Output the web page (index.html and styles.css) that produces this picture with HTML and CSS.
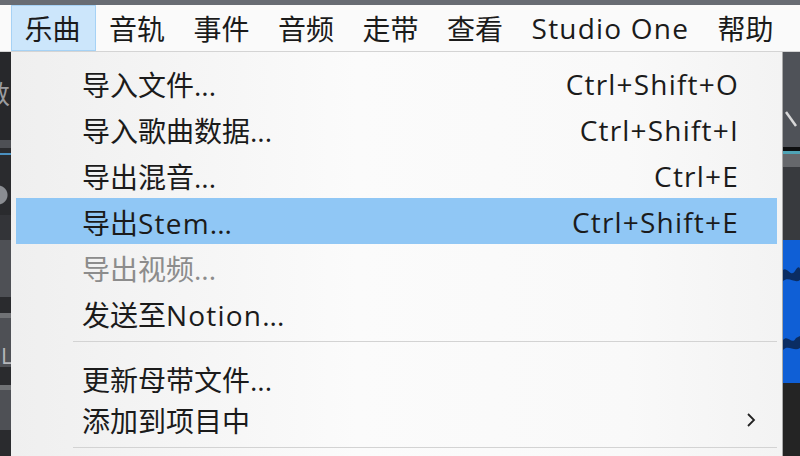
FILE: index.html
```html
<!DOCTYPE html>
<html>

<head>
    <title>Studio One - 乐曲</title>
    <link rel="stylesheet" href="styles.css">
</head>

<body>
    <div class="screen">
        <div class="topline"></div>
        <nav class="menubar">
            <span class="menu-title active">乐曲</span>
            <span class="menu-title">音轨</span>
            <span class="menu-title">事件</span>
            <span class="menu-title">音频</span>
            <span class="menu-title">走带</span>
            <span class="menu-title">查看</span>
            <span class="menu-title lat">Studio One</span>
            <span class="menu-title">帮助</span>
        </nav>
        <div class="workspace">
            <!-- bits of the DAW window behind the menu -->
            <div class="edge edge-left">
                <div class="band l-head glyph">数</div>
                <div class="band l-grey" style="height: 8px"></div>
                <div class="band l-dark" style="height: 5px"></div>
                <div class="band l-blue"></div>
                <div class="band l-knob"></div>
                <div class="band l-dark2" style="height: 25px"></div>
                <div class="band l-grey" style="height: 57px"></div>
                <div class="band l-dark" style="height: 16px"></div>
                <div class="band l-light"></div>
                <div class="band l-grey glyph glyph-l">L</div>
                <div class="band l-dark" style="height: 18px"></div>
                <div class="band l-light"></div>
                <div class="band l-grey" style="height: 40px"></div>
                <div class="band l-dark fill"></div>
            </div>

            <div class="dropdown">
                <div class="item">
                    <span class="label">导入文件...</span>
                    <span class="key">Ctrl+Shift+O</span>
                </div>
                <div class="item">
                    <span class="label">导入歌曲数据...</span>
                    <span class="key">Ctrl+Shift+I</span>
                </div>
                <div class="item">
                    <span class="label">导出混音...</span>
                    <span class="key">Ctrl+E</span>
                </div>
                <div class="item selected">
                    <span class="label">导出<span class="lat">Stem</span>...</span>
                    <span class="key">Ctrl+Shift+E</span>
                </div>
                <div class="item disabled">
                    <span class="label">导出视频...</span>
                </div>
                <div class="item">
                    <span class="label">发送至<span class="lat">Notion</span>...</span>
                </div>
                <div class="sep"></div>
                <div class="item compact">
                    <span class="label">更新母带文件...</span>
                </div>
                <div class="item compact">
                    <span class="label">添加到项目中</span>
                    <svg class="submenu-arrow" width="10" height="16" viewBox="0 0 10 16">
                        <polyline points="2,2 8,8 2,14" fill="none" stroke="#222" stroke-width="1.8" />
                    </svg>
                </div>
                <div class="sep sep-bottom"></div>
            </div>

            <div class="edge edge-right">
                <div class="band r-top">
                    <svg width="17" height="95" viewBox="0 0 17 95">
                        <line x1="3" y1="60" x2="13" y2="74" stroke="#d8d8d8" stroke-width="2.5" />
                    </svg>
                </div>
                <div class="band r-black"></div>
                <div class="band r-cyan"></div>
                <div class="band r-grey"></div>
                <div class="band r-dark"></div>
                <div class="band r-wave">
                    <svg width="17" height="143" viewBox="0 0 17 143">
                        <path d="M0 30 C4 26 8 38 12 31 S17 29 17 29 L17 40 C12 44 6 36 0 41 Z" fill="#0b2d63" />
                        <path d="M0 100 C5 94 9 106 13 98 L17 96 L17 108 C11 112 5 104 0 110 Z" fill="#0b2d63" />
                    </svg>
                </div>
                <div class="band r-bottom"></div>
            </div>
        </div>
    </div>
</body>

</html>
```

FILE: styles.css
```css
html,
body {
    margin: 0;
    padding: 0;
    background: #26272a;
}

.screen {
    width: 800px;
    height: 456px;
    overflow: hidden;
    display: flex;
    flex-direction: column;
    font-family: "Open Sans", "Noto Sans CJK SC", sans-serif;
    font-size: 28px;
    color: #1b1b1b;
}

/* latin words run a bit wider than Open Sans in the original */
.lat,
.key {
    letter-spacing: 1.2px;
}

.topline {
    height: 5px;
    flex: none;
    background: #686c73;
}

/* Menu bar across the top */
.menubar {
    height: 46px;
    flex: none;
    display: flex;
    align-items: stretch;
    padding-left: 11px;
    background: #fafafa;
    border-bottom: 1px solid #d4d4d4;
}

.menu-title {
    display: flex;
    align-items: center;
    padding: 0 14px 1px 12.5px;
    border: 1px solid transparent;
    white-space: nowrap;
}

.menu-title.active {
    background: #cce6fb;
    border-color: #a6d2f5;
}

.workspace {
    flex: 1;
    display: flex;
    min-height: 0;
}

/* Edges of the app visible behind the menu */
.edge {
    flex: none;
    display: flex;
    flex-direction: column;
    overflow: hidden;
}

.edge-left {
    width: 11px;
}

.edge-right {
    width: 17px;
}

.band {
    flex: none;
}

.band svg {
    display: block;
}

.l-head {
    height: 88px;
    background: #27282b;
}

.l-dark {
    background: #2a2b2e;
}

.l-dark2 {
    background: #333438;
}

.l-dark.fill {
    flex: 1;
}

.l-grey {
    background: #4e5055;
}

.l-light {
    height: 5px;
    background: #707275;
}

.l-blue {
    height: 2px;
    background: #4a90c0;
}

.l-knob {
    height: 60px;
    background: radial-gradient(circle at -2px 40px, #8a8d92 0 9px, #2a2b2e 10px);
}

.glyph {
    font-size: 26px;
    line-height: 84px;
    color: #9a9ca0;
    text-indent: -16px;
    white-space: nowrap;
}

.glyph-l {
    height: 49px;
    font-size: 22px;
    line-height: 24px;
    padding-top: 25px;
    box-sizing: border-box;
    text-indent: 1px;
    color: #b5b7ba;
}

.r-top {
    height: 95px;
    background: #4f5258;
}

.r-black {
    height: 4px;
    background: #0e0f10;
}

.r-cyan {
    height: 3px;
    background: #4fa3b5;
}

.r-grey {
    height: 13px;
    background: #66686c;
}

.r-dark {
    height: 73px;
    background: #383a3e;
}

.r-wave {
    height: 143px;
    background: #0f5fd6;
}

.r-bottom {
    flex: 1;
    background: #242424;
}

/* The open 乐曲 menu */
.dropdown {
    width: 771px;
    flex: none;
    padding-top: 8px;
    border-right: 1px solid #a9a9a9;
    background: linear-gradient(to right, #efefef, #fbfbfb 45%, #f9f9f9 80%, #f3f3f3);
    display: flex;
    flex-direction: column;
}

.item {
    flex: none;
    height: 46px;
    margin: 0 5px;
    padding: 2px 38px 0 66px;
    box-sizing: border-box;
    display: flex;
    align-items: center;
    justify-content: space-between;
    white-space: nowrap;
}

.item.compact {
    height: 41px;
}

.item.selected {
    background: #90c7f5;
}

.item.disabled {
    color: #8c8c8c;
}

.submenu-arrow {
    margin-right: -17px;
}

.sep {
    flex: none;
    height: 1px;
    margin: 5px 5px 15px 62px;
    background: #d3d3d3;
}

.sep-bottom {
    margin-top: 8px;
    margin-bottom: 0;
}
```
